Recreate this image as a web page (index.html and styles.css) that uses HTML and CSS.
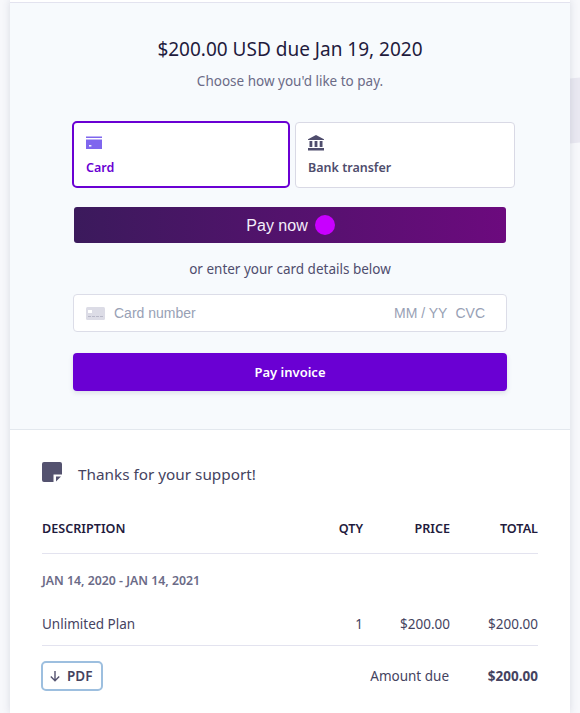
FILE: index.html
```html
<!DOCTYPE html>
<html lang="en">
<head>
<meta charset="utf-8">
<title>Invoice</title>
<link rel="stylesheet" href="styles.css">
</head>
<body>
<div class="backdrop"></div>
<main class="card">
  <section class="pay">
    <h1 class="due">$200.00 USD due Jan 19, 2020</h1>
    <p class="choose">Choose how you'd like to pay.</p>
    <div class="tabs">
      <div class="tab tab-active">
        <svg class="tab-icon" viewBox="0 0 16 13" width="16" height="13"><path fill="#7f66ee" d="M0 0h16v1.4H0zM0 3h16v9.6H0z"/><path fill="#fff" d="M3 8.6h2.4v1.4H3z"/></svg>
        <span>Card</span>
      </div>
      <div class="tab">
        <svg class="tab-icon" viewBox="0 0 16 16" width="16" height="16"><path fill="#4f4d6d" d="M8 0l8 4.200V5H0v-.8zM1.500 6h2.800v6H1.500zM6.600 6h2.800v6H6.600zM11.700 6h2.800v6h-2.800zM0 13h16v2.600H0z"/></svg>
        <span>Bank transfer</span>
      </div>
    </div>
    <div class="wallet"><span class="wallet-label">Pay now</span><i class="dot"></i></div>
    <p class="or">or enter your card details below</p>
    <div class="field">
      <svg viewBox="0 0 19 13" width="19" height="13"><rect width="19" height="13" rx="1.500" fill="#dcdce6"/><path fill="#fff" d="M2 3h4v3H2z"/><path fill="#b8b8c8" d="M2 9h3v1H2zM6 9h3v1H6zM10 9h3v1h-3zM14 9h3v1h-3z"/></svg>
      <span class="ph ph-number">Card number</span>
      <span class="ph">MM / YY</span>
      <span class="ph ph-cvc">CVC</span>
    </div>
    <div class="submit">Pay invoice</div>
  </section>
  <section class="invoice">
    <div class="memo">
      <svg viewBox="0 0 20 20" width="20" height="20"><path fill="#54526f" d="M2 0h16a2 2 0 0 1 2 2v10.500h-8.500V20H2a2 2 0 0 1-2-2V2a2 2 0 0 1 2-2z"/><path fill="#54526f" d="M14 14.500h5L14 19.500z"/></svg>
      <span class="memo-text">Thanks for your support!</span>
    </div>
    <div class="row head">
      <span>DESCRIPTION</span><span class="num">QTY</span><span class="num">PRICE</span><span class="num">TOTAL</span>
    </div>
    <div class="period">JAN 14, 2020 - JAN 14, 2021</div>
    <div class="row item">
      <span>Unlimited Plan</span><span class="num">1</span><span class="num">$200.00</span><span class="num">$200.00</span>
    </div>
    <div class="foot">
      <div class="pdf">
        <svg viewBox="0 0 12 12" width="12" height="12"><path fill="none" stroke="#54526f" stroke-width="1.400" d="M6 1v9.500M1.800 6.500L6 10.700l4.200-4.200"/></svg>
        <span>PDF</span>
      </div>
      <span class="amount">Amount due</span>
      <strong class="amount-value">$200.00</strong>
    </div>
  </section>
</main>
</body>
</html>
```
FILE: styles.css
```css
* { box-sizing: border-box; }
html, body { margin: 0; height: 713px; overflow: hidden; }
body {
  position: relative;
  background: #f7f8fb;
  font-family: "Noto Sans", sans-serif;
  color: #1f1b3d;
}
.backdrop {
  position: absolute;
  left: 570px;
  top: 78px;
  width: 10px;
  height: 65px;
  background: #e9e8f1;
  transform: skewY(-5deg);
}
.card {
  position: relative;
  width: 560px;
  height: 713px;
  margin: 0 10px;
  background: #fff;
  box-shadow: 0 0 8px rgba(60, 66, 100, .16);
  padding-top: 2px;
}
.pay {
  height: 428px;
  padding: 35px 63px 0;
  background: #f7fafd;
  border-top: 1px solid #e3e3ef;
  border-bottom: 1px solid #e3e8ee;
  text-align: center;
}
.due { margin: 0; font-size: 19px; line-height: 22px; font-weight: 400; }
.choose { margin: 11px 0 0; font-size: 13.500px; line-height: 20px; color: #6b6b87; }
.tabs { display: flex; gap: 5px; margin: 30px -8px 0 -1px; text-align: left; }
.tab {
  flex: none;
  width: 220px;
  height: 66px;
  margin-top: 1px;
  padding: 12px 12px 0;
  background: #fff;
  border: 1px solid #d9d9e5;
  border-radius: 4px;
  font-size: 12.500px;
  font-weight: 600;
  line-height: 18px;
  color: #4f4d6d;
}
.tab-active {
  width: 218px;
  height: 67px;
  margin-top: 0;
  border: 2px solid #6a00d3;
  border-radius: 5px;
  color: #6a00d3;
}
.tab-icon { display: block; margin-bottom: 8px; height: 16px; }
.wallet {
  display: flex;
  justify-content: center;
  align-items: center;
  gap: 7px;
  width: 432px;
  height: 36px;
  margin: 19px 0 0 1px;
  padding-left: 1px;
  border-radius: 3px;
  background: linear-gradient(90deg, #3b1a5c, #6c0a7e);
  color: #f4eefa;
  font-family: "Liberation Sans", Arial, sans-serif;
  font-size: 16px;
}
.wallet-label { padding-top: 2px; }
.dot { width: 20px; height: 20px; border-radius: 50%; background: #c800ff; }
.or { margin: 16px 0 0; font-size: 13.500px; line-height: 20px; color: #4f4d6d; }
.field {
  display: flex;
  align-items: center;
  width: 434px;
  height: 38px;
  margin-top: 15px;
  padding: 0 21px 0 12px;
  background: #fff;
  border: 1px solid #dcdde8;
  border-radius: 4px;
  font-family: "Liberation Sans", Arial, sans-serif;
  font-size: 14px;
  color: #98a1b5;
}
.ph-number { flex: 1; margin-left: 9px; text-align: left; }
.ph-cvc { margin-left: 8px; }
.submit {
  width: 434px;
  height: 38px;
  margin-top: 21px;
  border-radius: 4px;
  background: #6a00d3;
  box-shadow: 0 2px 5px rgba(60, 66, 100, .14);
  color: #fff;
  font-size: 13px;
  font-weight: 600;
  line-height: 39px;
}
.invoice { padding: 32px 32px 0; font-size: 13.500px; color: #45435f; }
.memo { display: flex; align-items: center; gap: 16px; height: 20px; font-size: 15.300px; }
.memo-text { padding-top: 3px; }
.row {
  display: grid;
  grid-template-columns: 1fr 50px 87px 88px;
  align-items: center;
}
.num { text-align: right; }
.head {
  height: 56px;
  margin-top: 16px;
  padding-top: 5px;
  border-bottom: 1px solid #e3e3ef;
  font-size: 12.600px;
  font-weight: 600;
  color: #1f1b3d;
}
.period { margin-top: 18px; font-size: 12.300px; line-height: 18px; font-weight: 600; color: #6b6b87; }
.item { height: 53px; margin-top: 3px; padding-top: 10px; border-bottom: 1px solid #e3e3ef; font-size: 13.500px; }
.foot { display: flex; align-items: center; height: 30px; margin-top: 15px; }
.pdf {
  display: flex;
  align-items: center;
  gap: 6px;
  width: 62px;
  height: 30px;
  margin-left: -1px;
  padding-left: 6px;
  background: #fff;
  border: 2px solid #9dbfdf;
  border-radius: 5px;
  font-size: 13.500px;
  font-weight: 600;
}
.amount { margin-left: auto; }
.amount-value { width: 89px; text-align: right; font-weight: 700; }
```
